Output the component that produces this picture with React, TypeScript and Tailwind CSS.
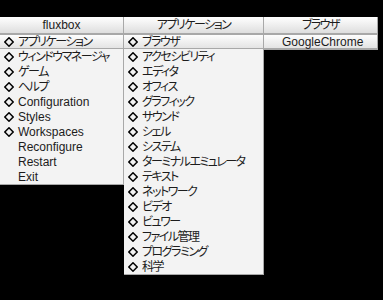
import React from "react";

const Diamond = () => (
  <svg width="10" height="10" viewBox="0 0 10 10" className="absolute left-[4px] top-[3px]">
    <path d="M5 0.8 L9.2 5 L5 9.2 L0.8 5 Z" fill="none" stroke="#000" strokeWidth="1.5" />
  </svg>
);

type Item = { label: string; sub?: boolean; active?: boolean };

const isCJK = (s: string) => /[\u3040-\u30ff\u4e00-\u9fff]/.test(s);

const Row = ({ item }: { item: Item }) => (
  <div
    className={
      "relative h-[15px] pl-[18px] leading-[15px] whitespace-nowrap " +
      (item.active
        ? "bg-gradient-to-b from-[#ffffff] to-[#e2e2e2] shadow-[inset_0_1px_0_#a8a8a8,inset_0_-1px_0_#a8a8a8]"
        : "")
    }
  >
    {item.sub && <Diamond />}
    <span className={"relative top-[1px] " + (isCJK(item.label) ? "tracking-[-1.5px]" : "")}>{item.label}</span>
  </div>
);

const Menu = ({ title, items, width }: { title: string; items: Item[]; width: string }) => (
  <div className={"flex flex-col " + width}>
    <div className="h-[17px] border-b border-r border-[#a8a8a8] bg-gradient-to-b from-[#ffffff] to-[#dedede] text-center leading-[17px]">
      <span className={isCJK(title) ? "tracking-[-1.5px]" : ""}>{title}</span>
    </div>
    <div className="bg-[#f3f3f3] border-r border-b border-[#a8a8a8]">
      {items.map((it, i) => (
        <Row key={i} item={it} />
      ))}
    </div>
  </div>
);

export default function App() {
  const m1: Item[] = [
    { label: "アプリケーション", sub: true, active: true },
    { label: "ウィンドウマネージャ", sub: true },
    { label: "ゲーム", sub: true },
    { label: "ヘルプ", sub: true },
    { label: "Configuration", sub: true },
    { label: "Styles", sub: true },
    { label: "Workspaces", sub: true },
    { label: "Reconfigure" },
    { label: "Restart" },
    { label: "Exit" },
  ];
  const m2: Item[] = [
    { label: "ブラウザ", sub: true, active: true },
    { label: "アクセシビリティ", sub: true },
    { label: "エディタ", sub: true },
    { label: "オフィス", sub: true },
    { label: "グラフィック", sub: true },
    { label: "サウンド", sub: true },
    { label: "シェル", sub: true },
    { label: "システム", sub: true },
    { label: "ターミナルエミュレータ", sub: true },
    { label: "テキスト", sub: true },
    { label: "ネットワーク", sub: true },
    { label: "ビデオ", sub: true },
    { label: "ビュワー", sub: true },
    { label: "ファイル管理", sub: true },
    { label: "プログラミング", sub: true },
    { label: "科学", sub: true },
  ];
  const m3: Item[] = [{ label: "GoogleChrome", active: true }];
  return (
    <div
      className="w-[383px] h-[300px] bg-black overflow-hidden pt-[17px] flex items-start text-[12px] text-[#1c1c1c] [font-feature-settings:'palt']"
      style={{ fontFamily: '"Liberation Sans", "Noto Sans CJK JP", sans-serif' }}
    >
      <Menu title="fluxbox" items={m1} width="w-[124px]" />
      <Menu title="アプリケーション" items={m2} width="w-[140px]" />
      <Menu title="ブラウザ" items={m3} width="w-[114px]" />
    </div>
  );
}
